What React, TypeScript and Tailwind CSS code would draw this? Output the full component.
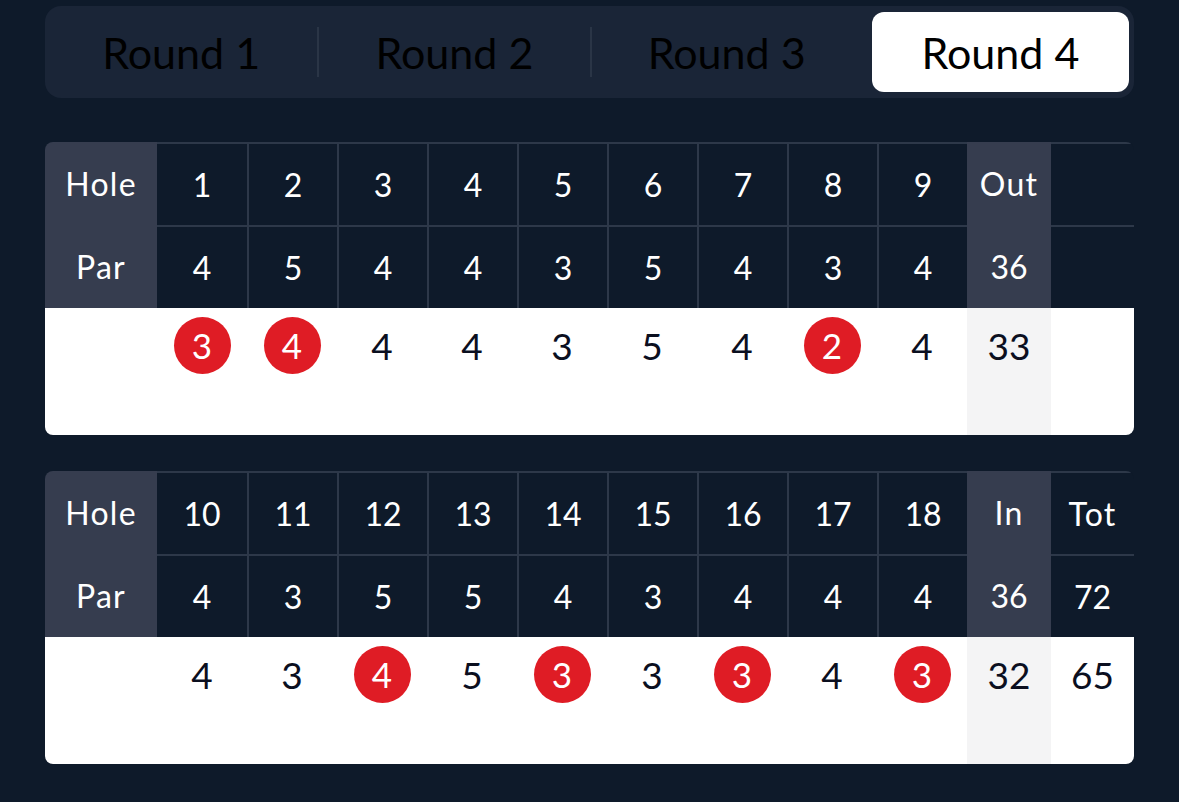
const rounds = ['Round 1', 'Round 2', 'Round 3', 'Round 4']

type Half = {
    holes: string[]
    pars: number[]
    scores: number[]
    sumLabel: string
    parSum: number
    scoreSum: number
    total?: { label: string; par: number; score: number }
}

const front: Half = {
    holes: ['1', '2', '3', '4', '5', '6', '7', '8', '9'],
    pars: [4, 5, 4, 4, 3, 5, 4, 3, 4],
    scores: [3, 4, 4, 4, 3, 5, 4, 2, 4],
    sumLabel: 'Out',
    parSum: 36,
    scoreSum: 33,
}

const back: Half = {
    holes: ['10', '11', '12', '13', '14', '15', '16', '17', '18'],
    pars: [4, 3, 5, 5, 4, 3, 4, 4, 4],
    scores: [4, 3, 4, 5, 3, 3, 3, 4, 3],
    sumLabel: 'In',
    parSum: 36,
    scoreSum: 32,
    total: { label: 'Tot', par: 72, score: 65 },
}

function Card({ half }: { half: Half }) {
    const cols = 'grid grid-cols-[112px_repeat(9,90px)_84px_1fr]'
    return (
        <div className="rounded-lg overflow-hidden">
            <div className={`${cols} h-[83px] text-white text-[32px]`}>
                <div className="bg-[#363d4f] flex items-center justify-center tracking-[0.04em]">Hole</div>
                {half.holes.map((h, i) => (
                    <div key={h} className={`bg-[#0e1a2a] border-t-2 border-[#2d3849] flex items-center justify-center ${i > 0 ? 'border-l-2' : ''}`}>{h}</div>
                ))}
                <div className="bg-[#363d4f] flex items-center justify-center tracking-[0.04em]">{half.sumLabel}</div>
                <div className="bg-[#0e1a2a] border-t-2 border-[#2d3849] flex items-center justify-center tracking-[0.04em]">{half.total?.label}</div>
            </div>
            <div className={`${cols} h-[83px] text-white text-[32px]`}>
                <div className="bg-[#363d4f] flex items-center justify-center tracking-[0.04em]">Par</div>
                {half.pars.map((p, i) => (
                    <div key={i} className={`bg-[#0e1a2a] border-t-2 border-[#2d3849] flex items-center justify-center ${i > 0 ? 'border-l-2' : ''}`}>{p}</div>
                ))}
                <div className="bg-[#363d4f] flex items-center justify-center">{half.parSum}</div>
                <div className="bg-[#0e1a2a] border-t-2 border-[#2d3849] flex items-center justify-center">{half.total?.par}</div>
            </div>
            <div className={`${cols} h-[127px] bg-white text-[#0b0f1f] text-[37px]`}>
                <div />
                {half.scores.map((s, i) => (
                    <div key={i} className="flex justify-center pt-[9px]">
                        {s < half.pars[i] ? (
                            <span className="w-[57px] h-[57px] rounded-full bg-[#df1c25] text-white flex items-center justify-center text-[35px]">{s}</span>
                        ) : (
                            <span className="h-[57px] flex items-center">{s}</span>
                        )}
                    </div>
                ))}
                <div className="bg-[#f4f4f5] flex justify-center pt-[9px]">
                    <span className="h-[57px] flex items-center">{half.scoreSum}</span>
                </div>
                <div className="flex justify-center pt-[9px]">
                    <span className="h-[57px] flex items-center">{half.total?.score}</span>
                </div>
            </div>
        </div>
    )
}

export default function App() {
    return (
        <div className="w-[1179px] h-[802px] bg-[#0e1a2a] px-[45px] pt-[6px] font-['Lato',sans-serif] leading-none">
            <div className="h-[92px] bg-[#1a2537] rounded-2xl grid grid-cols-4">
                {rounds.map((r, i) =>
                    i === 3 ? (
                        <div key={r} className="h-full pl-[10px] pr-[5px] py-[6px]">
                            <div className="h-full bg-white rounded-xl flex items-center justify-center text-[43px] text-black">{r}</div>
                        </div>
                    ) : (
                        <div key={r} className="h-full flex items-center">
                            {i > 0 && <div className="w-[2px] h-[50px] bg-[#2a3546]" />}
                            <div className="flex-1 flex items-center justify-center text-[43px] text-black">{r}</div>
                        </div>
                    )
                )}
            </div>
            <div className="mt-[44px] flex flex-col gap-[36px]">
                <Card half={front} />
                <Card half={back} />
            </div>
        </div>
    )
}
